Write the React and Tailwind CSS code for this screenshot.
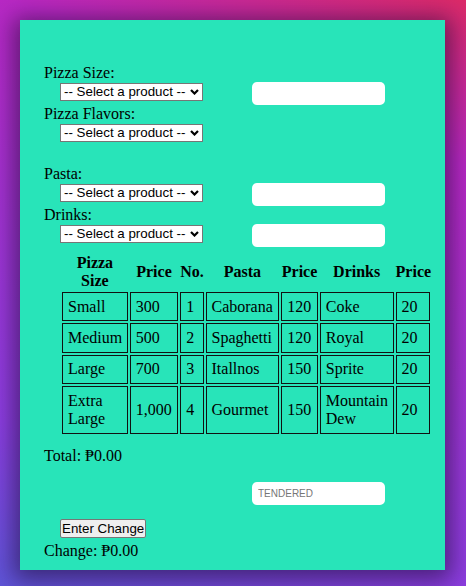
import React, { useState } from 'react';

const PIZZA = [
  ['Small', '300'],
  ['Medium', '500'],
  ['Large', '700'],
  ['Extra Large', '1,000'],
];
const PASTA = [
  ['1', 'Caborana', '120'],
  ['2', 'Spaghetti', '120'],
  ['3', 'Itallnos', '150'],
  ['4', 'Gourmet', '150'],
];
const DRINKS = [
  ['Coke', '20'],
  ['Royal', '20'],
  ['Sprite', '20'],
  ['Mountain Dew', '20'],
];

const ProductSelect = () => (
  <div className="relative ml-4 mt-[0.5px] h-[18px] w-[143px]">
    <select className="block h-full w-full appearance-none border border-[#767676] bg-white pl-[3px] text-[13.33px] leading-[16px] text-black [font-family:'Liberation_Sans',Arial,sans-serif]">
      <option>-- Select a product --</option>
    </select>
    <svg
      className="pointer-events-none absolute right-[4px] top-[6px]"
      width="9"
      height="6"
      viewBox="0 0 9 6"
      fill="none"
    >
      <path d="M1 1l3.5 3.5L8 1" stroke="#000" strokeWidth="2.2" />
    </svg>
  </div>
);

const Box = ({ placeholder, className = '', ...rest }) => (
  <input
    placeholder={placeholder}
    {...rest}
    className={`block h-[23px] w-[133px] rounded-[5px] bg-white px-[6px] text-[10px] text-black placeholder:text-[#767676] [font-family:'Liberation_Sans',Arial,sans-serif] ${className}`}
  />
);

const Label = ({ children }) => <div className="h-[18px] leading-[18px]">{children}</div>;

const Cell = ({ children }) => (
  <td className="border border-[#111] px-[5px] py-[4.7px] align-middle leading-[18px]">{children}</td>
);

export default function App() {
  const [tendered, setTendered] = useState('');

  return (
    <div className="h-[586px] w-full bg-[linear-gradient(20deg,#5f55d8,#8c3ee0_22%,#b828c4_78%,#dc2a68)] p-5">
      <div className="h-[550px] w-[425px] bg-[#28e4b9] pl-6 pt-[44px] text-[16px] text-black shadow-[0_4px_22px_6px_rgba(20,10,40,0.55)] [font-family:'Liberation_Serif','Times_New_Roman',serif]">
        <Label>Pizza Size:</Label>
        <div className="flex h-[23px] items-start">
          <ProductSelect />
          <Box className="ml-[49px]" />
        </div>

        <Label>Pizza Flavors:</Label>
        <div className="h-[41.5px]">
          <ProductSelect />
        </div>

        <Label>Pasta:</Label>
        <div className="flex h-[23px] items-start">
          <ProductSelect />
          <Box className="ml-[49px]" />
        </div>

        <Label>Drinks:</Label>
        <div className="flex h-[23px] items-start">
          <ProductSelect />
          <Box className="ml-[49px]" />
        </div>

        <table className="ml-4 mt-[5px] w-[372px] table-fixed border-separate border-spacing-[2.5px]">
          <thead>
            <tr className="font-bold leading-[18px]">
              <th className="w-[65px]">Pizza Size</th>
              <th className="w-[48px]">Price</th>
              <th className="w-[23px]">No.</th>
              <th className="w-[73px]">Pasta</th>
              <th className="w-[36px]">Price</th>
              <th className="w-[73px]">Drinks</th>
              <th className="w-[34px]">Price</th>
            </tr>
          </thead>
          <tbody>
            {PIZZA.map((p, i) => (
              <tr key={p[0]}>
                <Cell>{p[0]}</Cell>
                <Cell>{p[1]}</Cell>
                <Cell>{PASTA[i][0]}</Cell>
                <Cell>{PASTA[i][1]}</Cell>
                <Cell>{PASTA[i][2]}</Cell>
                <Cell>{DRINKS[i][0]}</Cell>
                <Cell>{DRINKS[i][1]}</Cell>
              </tr>
            ))}
          </tbody>
        </table>

        <div className="mt-[11px] leading-[18px]">Total: ₱0.00</div>

        <div className="mt-[17px] ml-[208px]">
          <Box placeholder="TENDERED" value={tendered} onChange={(e) => setTendered(e.target.value)} />
        </div>

        <button className="mt-[14px] ml-4 block h-[19px] rounded-[2px] border border-[#767676] bg-[#efefef] px-[1px] text-[13.33px] leading-[15px] text-black [font-family:'Liberation_Sans',Arial,sans-serif]">
          Enter Change
        </button>

        <div className="mt-[4px] leading-[18px]">Change: ₱0.00</div>
      </div>
    </div>
  );
}
